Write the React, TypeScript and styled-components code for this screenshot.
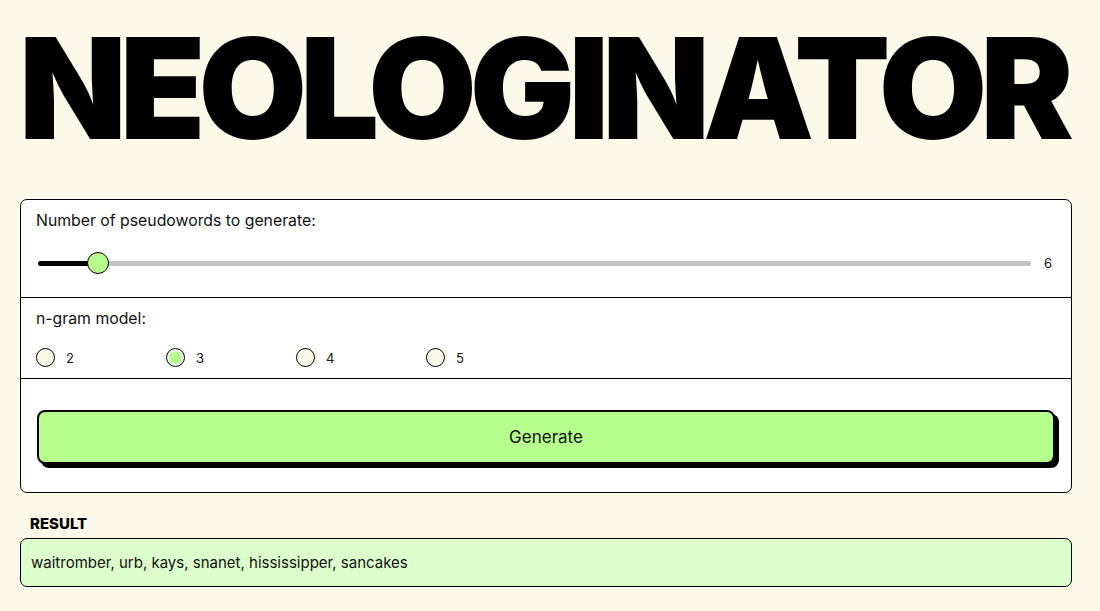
import React, { useState } from "react";
import styled, { createGlobalStyle } from "styled-components";

const GlobalStyle = createGlobalStyle`
  html, body {
    margin: 0;
    padding: 0;
    background: #fdf9e8;
  }
  body {
    font-family: Inter, "Noto Sans", sans-serif;
    color: #111;
  }
`;

const Page = styled.main`
  padding: 24px 28px 0 20px;
  display: flex;
  flex-direction: column;
`;

const Title = styled.h1`
  margin: 0 0 0 -1px;
  font-family: Inter, "Liberation Sans", sans-serif;
  font-weight: 900;
  font-size: 140px;
  line-height: 128px;
  letter-spacing: -7px;
  color: #000;
  white-space: nowrap;
`;

const Panel = styled.section`
  margin-top: 47px;
  background: #fff;
  border: 1px solid #000;
  border-radius: 7px;
  display: flex;
  flex-direction: column;
`;

const Section = styled.div<{ $last?: boolean }>`
  padding: 12px 15px 0 15px;
  border-bottom: ${({ $last }) => ($last ? "none" : "1px solid #000")};
`;

const Label = styled.div`
  font-size: 15.8px;
  line-height: 18px;
`;

const SliderRow = styled.div`
  display: flex;
  align-items: center;
  height: 26px;
  margin: 20px 0 21px 0;
  gap: 13px;
`;

const Track = styled.div`
  position: relative;
  flex: 1;
  height: 5px;
  margin-left: 2px;
  border-radius: 3px;
  background: #c2c2c2;
`;

const Fill = styled.div`
  position: absolute;
  left: 0;
  top: 0;
  bottom: 0;
  background: #000;
  border-radius: 3px;
`;

const Thumb = styled.div`
  position: absolute;
  top: 50%;
  width: 20px;
  height: 20px;
  margin: -11px 0 0 -11px;
  border-radius: 50%;
  border: 1px solid #000;
  background: #b6ff8e;
`;

const Value = styled.span`
  font-size: 13px;
  width: 8px;
  margin-right: 4px;
`;

const RadioGroup = styled.div`
  display: flex;
  margin: 20px 0 11px 0;
`;

const RadioOption = styled.label`
  display: flex;
  align-items: center;
  gap: 11px;
  width: 130px;
  font-size: 13px;
  cursor: pointer;
`;

const RadioCircle = styled.span<{ $checked: boolean }>`
  width: 19px;
  height: 19px;
  box-sizing: border-box;
  border-radius: 50%;
  border: 1px solid #000;
  background: ${({ $checked }) => ($checked ? "#b6ff8e" : "#fdf9e8")};
  box-shadow: ${({ $checked }) => ($checked ? "inset 0 0 0 2px #fff" : "none")};
`;

const ButtonWrap = styled.div`
  padding: 19px 0 28px 1px;
`;

const GenerateButton = styled.button`
  width: calc(100% - 1px);
  height: 54px;
  border: 2px solid #000;
  border-radius: 8px;
  background: #b6ff8e;
  box-shadow: 4px 4px 0 #000;
  font-family: Inter, "Noto Sans", sans-serif;
  font-size: 17px;
  color: #111;
  cursor: pointer;
`;

const ResultLabel = styled.div`
  margin: 22px 0 6px 10px;
  font-size: 15px;
  font-weight: 800;
  line-height: 17px;
  color: #000;
`;

const ResultBox = styled.div`
  background: #ddffcc;
  border: 1px solid #000;
  border-radius: 7px;
  padding: 14px 10px 13px 10px;
  font-size: 15px;
  line-height: 20px;
`;

export default function App() {
  const [count] = useState(6);
  const [model, setModel] = useState(3);
  const pct = 6;

  return (
    <>
      <GlobalStyle />
      <Page>
        <Title>NEOLOGINATOR</Title>
        <Panel>
          <Section>
            <Label>Number of pseudowords to generate:</Label>
            <SliderRow>
              <Track>
                <Fill style={{ width: `${pct}%` }} />
                <Thumb style={{ left: `${pct}%` }} />
              </Track>
              <Value>{count}</Value>
            </SliderRow>
          </Section>
          <Section>
            <Label>n-gram model:</Label>
            <RadioGroup>
              {[2, 3, 4, 5].map((n) => (
                <RadioOption key={n} onClick={() => setModel(n)}>
                  <RadioCircle $checked={model === n} />
                  {n}
                </RadioOption>
              ))}
            </RadioGroup>
          </Section>
          <Section $last>
            <ButtonWrap>
              <GenerateButton>Generate</GenerateButton>
            </ButtonWrap>
          </Section>
        </Panel>
        <ResultLabel>RESULT</ResultLabel>
        <ResultBox>waitromber, urb, kays, snanet, hississipper, sancakes</ResultBox>
      </Page>
    </>
  );
}
